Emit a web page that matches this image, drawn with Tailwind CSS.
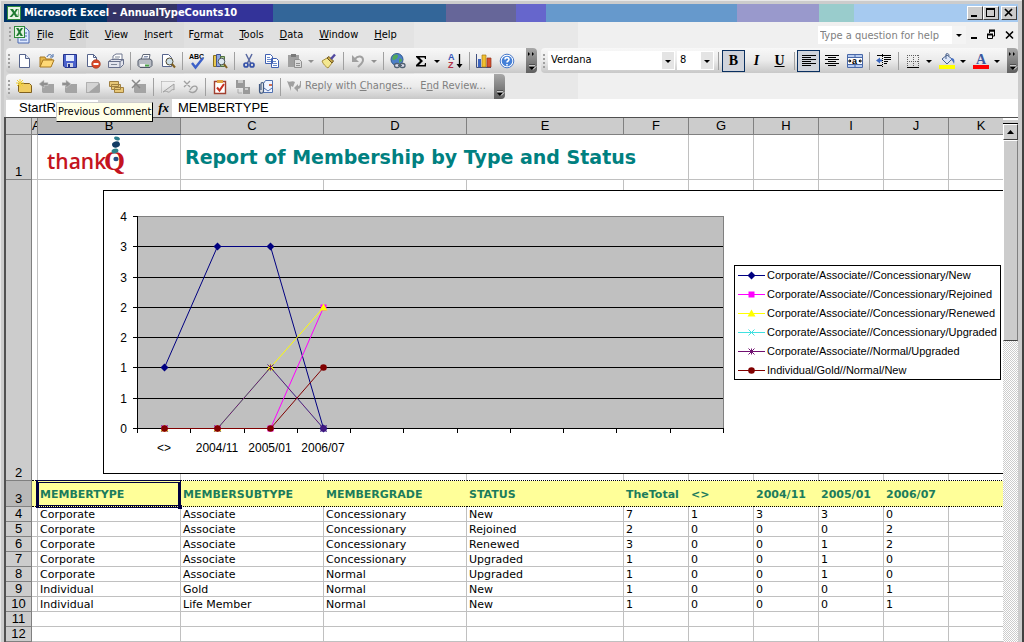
<!DOCTYPE html>
<html lang="en">
<head>
  <meta charset="UTF-8" />
  <meta name="viewport" content="width=device-width, initial-scale=1.0" />
  <title>Microsoft Excel - AnnualTypeCounts10</title>
  <script src="https://cdn.jsdelivr.net/npm/@tailwindcss/browser@4"></script>
</head>
<body class="bg-[#cccccc] text-black font-['DejaVu_Sans_Condensed','DejaVu_Sans',sans-serif] text-[11px]">
<div class="h-screen flex flex-col overflow-hidden pl-1 pt-1 pr-1 border-r-2 border-[#404040] shadow-[inset_1px_1px_0_#e8e8e8]">

  <!-- Title bar -->
  <header class="h-[18px] shrink-0 flex items-center pl-[3px] bg-[linear-gradient(90deg,#003366_103px,#333366_103px_173px,#333399_173px_269px,#336699_269px_442px,#666699_442px_512px,#6666cc_512px_542px,#6699cc_542px_733px,#9999cc_733px_815px,#99cccc_815px_850px,#a6caf0_850px)]">
    <svg class="size-[14px] shrink-0" viewBox="0 0 14 14"><rect x=".5" y=".5" width="13" height="13" fill="#e8f4e4" stroke="#2f8a3c"/><path d="M3 3h3l1.500 2.500L9 3h2L8.500 7l3 4h-3L7 8.500 5 11H2.500L6 7z" fill="#1e7a30"/><path d="M11.500 3v8M9.500 9h3" stroke="#8cc08c"/></svg>
    <h1 class="pl-[3px] text-[11px] leading-[18px] font-bold text-white whitespace-nowrap">Microsoft Excel - AnnualTypeCounts10</h1>
    <div class="ml-auto flex pr-px">
      <button aria-label="Minimize" class="w-4 h-[14px] bg-[#cccccc] border border-t-white border-l-white border-r-[#404040] border-b-[#404040]"><svg class="w-[14px] h-3" viewBox="0 0 14 12"><path d="M3 8h6v2H3z"/></svg></button>
      <button aria-label="Maximize" class="w-4 h-[14px] bg-[#cccccc] border border-t-white border-l-white border-r-[#404040] border-b-[#404040]"><svg class="w-[14px] h-3" viewBox="0 0 14 12"><path d="M2 1h9v9H2zM3 3v6h7V3z" fill-rule="evenodd"/></svg></button>
      <button aria-label="Close" class="ml-0.5 w-4 h-[14px] bg-[#cccccc] border border-t-white border-l-white border-r-[#404040] border-b-[#404040]"><svg class="w-[14px] h-3" viewBox="0 0 14 12"><path d="M3 2l7 7M10 2L3 9" stroke="#000" stroke-width="1.700"/></svg></button>
    </div>
  </header>

  <!-- Menus and toolbars -->
  <div class="shrink-0 bg-[linear-gradient(90deg,#d6d6d6_82px,#dcdcdc_82px_180px,#e0e0e0_180px_306px,#e3e3e3_306px_410px,#e8e8e8_410px_574px,#f0f0f0_574px)]">
    <nav class="h-[26px] flex items-center pl-1">
      <svg class="w-[22px] h-5 shrink-0" viewBox="0 0 22 20"><path d="M1 2h2v2H1zM1 6h2v2H1zM1 10h2v2H1zM1 14h2v2H1z" fill="#a0a0a0"/><path d="M10 3h8l3 3v12H10z" fill="#dce8ff" stroke="#4a68b0"/><path d="M16 8h3M16 11h3M12 15h7" stroke="#4a68b0"/><rect x="6.500" y="1.500" width="10" height="11" fill="#e4f2e0" stroke="#2f8a3c"/><path d="M8 3h2.500l1 2 1.500-2h2l-2.500 4 2.500 4h-2.500l-1-2-1.500 2H8l2.500-4z" fill="#1e7a30"/></svg>
      <ul class="-ml-px flex whitespace-nowrap">
        <li><button class="px-2"><u>F</u>ile</button></li>
        <li><button class="px-2"><u>E</u>dit</button></li>
        <li><button class="px-2"><u>V</u>iew</button></li>
        <li><button class="px-2"><u>I</u>nsert</button></li>
        <li><button class="px-2">F<u>o</u>rmat</button></li>
        <li><button class="px-2"><u>T</u>ools</button></li>
        <li><button class="px-2"><u>D</u>ata</button></li>
        <li><button class="px-2"><u>W</u>indow</button></li>
        <li><button class="px-2"><u>H</u>elp</button></li>
      </ul>
      <div class="ml-auto flex items-center h-[18px] bg-white">
        <input type="text" aria-label="Type a question for help" placeholder="Type a question for help" class="w-[134px] h-[18px] pl-0.5 placeholder:text-[#808080]" />
        <button aria-label="Show questions" class="w-[14px] h-[18px] bg-[#f4f4f4]"><svg class="w-[14px] h-[18px]" viewBox="0 0 14 18"><path d="M4 8h6l-3 3z"/></svg></button>
      </div>
      <button aria-label="Minimize workbook" class="w-4 h-4"><svg class="size-4" viewBox="0 0 16 16"><path d="M5 10h6v2H5z"/></svg></button>
      <button aria-label="Restore workbook" class="w-[18px] h-4"><svg class="w-[18px] h-4" viewBox="0 0 18 16"><path d="M7.500 6V4h5v5H11" fill="none" stroke="#000"/><path d="M7 3.500h6M5 7.500h6" stroke="#000" stroke-width="2"/><path d="M5.500 7v4.500h5V7" fill="none" stroke="#000"/></svg></button>
      <button aria-label="Close workbook" class="w-[18px] h-4"><svg class="w-[18px] h-4" viewBox="0 0 18 16"><path d="M6 4.500l7 7M13 4.500l-7 7" stroke="#000" stroke-width="1.600"/></svg></button>
    </nav>

    <div class="flex gap-1">
      <!-- Standard toolbar -->
      <div role="toolbar" aria-label="Standard" class="ml-0.5 h-[25px] flex items-center rounded bg-linear-to-b from-[#f8f8f8] via-[#ebebeb] to-[#c8c8c8]">
        <svg class="w-[6px] h-5" viewBox="0 0 6 20"><path d="M2 3h2v2H2zM2 7h2v2H2zM2 11h2v2H2zM2 15h2v2H2z" fill="#a0a0a0"/></svg>
        <button aria-label="New" class="w-[23px] flex justify-center"><svg class="size-4" viewBox="0 0 16 16"><path d="M3.500 1.500h6l4 4v9h-10z" fill="#fff" stroke="#56648c"/><path d="M9.500 1.500v4h4" fill="#dfe6f4" stroke="#56648c"/></svg></button>
        <button aria-label="Open" class="w-[23px] flex justify-center"><svg class="size-4" viewBox="0 0 16 16"><path d="M1 14V4h5l1 2h6v3" fill="#e6b84c" stroke="#a87820"/><path d="M1 14l3-7h11l-3 7z" fill="#ffd976" stroke="#a87820"/><path d="M8 4c1-3 4-3 5-1m1-2v3h-3" fill="none" stroke="#4068a8"/></svg></button>
        <button aria-label="Save" class="w-[23px] flex justify-center"><svg class="size-4" viewBox="0 0 16 16"><path d="M1.500 1.500h13v13H3l-1.500-1.500z" fill="#4b62cc" stroke="#24348c"/><path d="M4 2h8v6H4z" fill="#e4ecff"/><path d="M5 10h6v4H5z" fill="#d0d4e4"/><path d="M6 11h2v3H6z" fill="#24348c"/></svg></button>
        <button aria-label="Permission" class="w-[23px] flex justify-center"><svg class="size-4" viewBox="0 0 16 16"><path d="M2.500 1.500h6l3 3v9h-9z" fill="#fff" stroke="#56648c"/><path d="M8.500 1.500v3h3" fill="none" stroke="#56648c"/><circle cx="11" cy="11" r="4.300" fill="#d84828" stroke="#983018" stroke-width=".6"/><path d="M8.500 10h5v2h-5z" fill="#fff"/></svg></button>
        <button aria-label="E-mail" class="w-[23px] flex justify-center"><svg class="size-4" viewBox="0 0 16 16"><path d="M5 7V3l3-2h6v6" fill="#fff" stroke="#707890"/><path d="M.5 8.500l3-2h12v5l-3 3H.5z" fill="#e4e6ee" stroke="#68708c"/><path d="M.5 8.500h11.500v6M12 8.500l3.500-2" fill="none" stroke="#68708c"/><path d="M7 4h5M6 6h5M3 11.500h6" stroke="#808898"/></svg></button>
        <span class="w-[6px] h-[18px] flex justify-center"><i class="w-px bg-[#a0a0a0]"></i></span>
        <button aria-label="Print" class="w-[23px] flex justify-center"><svg class="size-4" viewBox="0 0 16 16"><path d="M4 7l2-5.500h7L12 7" fill="#fff" stroke="#606878"/><path d="M1 7.500l2-1.500h10l2 1.500v5l-2 2H3l-2-2z" fill="#b8bcc4" stroke="#505868"/><path d="M3 11h9v2.500H3z" fill="#f4f4f4"/><path d="M8 11.500h4v2H8z" fill="#48a048"/><path d="M7 3.500h4M6.500 5h4" stroke="#8894b0"/></svg></button>
        <button aria-label="Print preview" class="w-[23px] flex justify-center"><svg class="size-4" viewBox="0 0 16 16"><path d="M2.500 1.500h6l3 3v9h-9z" fill="#fff" stroke="#56648c"/><circle cx="9.500" cy="8.500" r="3.500" fill="#cfe0e8" stroke="#504830"/><path d="M12 11l3 3.500" stroke="#806020" stroke-width="2"/></svg></button>
        <span class="w-[6px] h-[18px] flex justify-center"><i class="w-px bg-[#a0a0a0]"></i></span>
        <button aria-label="Spelling" class="w-[23px] flex justify-center"><svg class="size-[18px]" viewBox="0 0 18 18"><text x="1" y="7" font-size="7" font-weight="bold" font-family="Liberation Sans, sans-serif">ABC</text><path d="M4 11l3.500 4.500L15 6" fill="none" stroke="#3c60c8" stroke-width="2.400"/></svg></button>
        <button aria-label="Research" class="w-[23px] flex justify-center"><svg class="size-4" viewBox="0 0 16 16"><path d="M1.500 2.500h3v11h-3z" fill="#e8c850" stroke="#887020"/><path d="M4.500 1.500h4v12h-4z" fill="#90a8e0" stroke="#405090"/><path d="M8.500 3.500h4v10h-4z" fill="#a8c890" stroke="#507040"/><circle cx="9.500" cy="8.500" r="3.300" fill="#dce8f0" stroke="#505860"/><path d="M12 11l3 4" stroke="#806020" stroke-width="2"/></svg></button>
        <span class="w-[6px] h-[18px] flex justify-center"><i class="w-px bg-[#a0a0a0]"></i></span>
        <button aria-label="Cut" class="w-[23px] flex justify-center"><svg class="size-4" viewBox="0 0 16 16"><path d="M5 1l4.500 9M11 1L6.500 10" stroke="#5868a0" stroke-width="1.500"/><circle cx="5" cy="12" r="2" fill="none" stroke="#3450a8" stroke-width="1.700"/><circle cx="11" cy="12" r="2" fill="none" stroke="#3450a8" stroke-width="1.700"/></svg></button>
        <button aria-label="Copy" class="w-[23px] flex justify-center"><svg class="size-4" viewBox="0 0 16 16"><path d="M1.500 1.500h5l2 2v7h-7zM7.500 5.500h5l2 2v7h-7z" fill="#fff" stroke="#4060b0"/><path d="M3 4.500h3M3 6.500h4M3 8.500h4M9 8.500h3M9 10.500h4M9 12.500h4" stroke="#6888cc"/></svg></button>
        <button aria-label="Paste" class="w-[23px] flex justify-center"><svg class="size-4" viewBox="0 0 16 16"><path d="M1 2h11v12H1z" fill="#a0a0a0"/><path d="M4 1h5v3H4z" fill="#787878"/><path d="M7.500 6.500h5l2 2v6h-7z" fill="#dcdcdc" stroke="#909090"/><path d="M9 10.500h4M9 12.500h4" stroke="#909090"/></svg></button>
        <button aria-label="Paste options" class="w-[11px]"><svg class="w-[11px] h-4" viewBox="0 0 11 16"><path d="M2 7h6l-3 3z" fill="#909090"/></svg></button>
        <button aria-label="Format painter" class="w-[23px] flex justify-center"><svg class="size-4" viewBox="0 0 16 16"><path d="M1 8l5-3 5 5-4 5c-2-1-5-4-6-7z" fill="#f4e890" stroke="#a89040"/><path d="M6 5l2-1.500 4.500 4.500L11 10z" fill="#c8a848" stroke="#705820"/><path d="M10 6l4-4.500" stroke="#5048a0" stroke-width="2.400"/></svg></button>
        <span class="w-[6px] h-[18px] flex justify-center"><i class="w-px bg-[#a0a0a0]"></i></span>
        <button aria-label="Undo" class="w-[23px] flex justify-center"><svg class="size-4" viewBox="0 0 16 16"><path d="M5 6c3-4 8-3 8 1 0 3-3 5-5 7" fill="none" stroke="#a0a0a0" stroke-width="2"/><path d="M2 2v7h7z" fill="#a0a0a0"/></svg></button>
        <button aria-label="Undo list" class="w-[11px]"><svg class="w-[11px] h-4" viewBox="0 0 11 16"><path d="M2 7h6l-3 3z" fill="#909090"/></svg></button>
        <span class="w-[6px] h-[18px] flex justify-center"><i class="w-px bg-[#a0a0a0]"></i></span>
        <button aria-label="Hyperlink" class="w-[23px] flex justify-center"><svg class="size-4" viewBox="0 0 16 16"><circle cx="7" cy="6.500" r="6" fill="#4c80c8" stroke="#305890"/><path d="M3 3c2-2 5-2 5 0S6 6 4 7 2 5 3 3zM9 6c2-1 3 0 3 2l-3 2z" fill="#50a858"/><rect x="4.500" y="10.500" width="5" height="4" rx="2" fill="#dde" stroke="#506070" stroke-width="1.300"/><rect x="10" y="10.500" width="5" height="4" rx="2" fill="#dde" stroke="#506070" stroke-width="1.300"/><path d="M8 12.500h4" stroke="#506070"/></svg></button>
        <button aria-label="AutoSum" class="w-[23px] flex justify-center"><svg class="size-4" viewBox="0 0 16 16"><path d="M3 3h10v3h-1l-.5-1.500H6.500L10 8l-4 4h5.500L12 10h1v3.500H3V12l4-4-4-4z"/></svg></button>
        <button aria-label="AutoSum list" class="w-[11px]"><svg class="w-[11px] h-4" viewBox="0 0 11 16"><path d="M2 7h6l-3 3z"/></svg></button>
        <button aria-label="Sort ascending" class="w-[23px] flex justify-center"><svg class="w-4 h-5" viewBox="0 0 16 20"><text x="1" y="9" font-size="9" font-weight="bold" font-family="Liberation Sans, sans-serif" fill="#3454b8">A</text><text x="1" y="17" font-size="9" font-weight="bold" font-family="Liberation Sans, sans-serif" fill="#b03048">Z</text><path d="M12.500 3v11" stroke="#000" stroke-width="1.300"/><path d="M9.500 13h6l-3 4z"/></svg></button>
        <span class="w-[6px] h-[18px] flex justify-center"><i class="w-px bg-[#a0a0a0]"></i></span>
        <button aria-label="Chart wizard" class="w-[23px] flex justify-center"><svg class="size-4" viewBox="0 0 16 16"><path d="M.5 1v13.500H15" fill="none" stroke="#405080"/><path d="M2 6h3v8H2z" fill="#3c64c0"/><path d="M6 2h4v12H6z" fill="#f0c030" stroke="#a87818" stroke-width=".7"/><path d="M11 5h4v9h-4z" fill="#d85030" stroke="#903018" stroke-width=".7"/></svg></button>
        <button aria-label="Help" class="w-[23px] flex justify-center"><svg class="size-4" viewBox="0 0 16 16"><circle cx="8" cy="8" r="6.800" fill="#fff" stroke="#4878c8"/><circle cx="8" cy="8" r="5.300" fill="#4480d8"/><path d="M6 6.500C6 4 10 4 10 6.500 10 8 8 8 8 9.500M8 11v1.500" fill="none" stroke="#fff" stroke-width="1.600"/></svg></button>
        <button aria-label="Toolbar options" class="ml-2 w-[11px] h-[25px] rounded-r bg-linear-to-b from-[#a8a8a8] to-[#606060]"><svg class="w-[11px] h-[25px]" viewBox="0 0 11 25"><path d="M2 4l2 2-2 2zM6 4l2 2-2 2zM3 16h6v1.200H3zM3 19h6l-3 3z"/><path d="M3 17.200h6M7 21.500l3-3" stroke="#fff"/></svg></button>
      </div>

      <!-- Formatting toolbar -->
      <div role="toolbar" aria-label="Formatting" class="flex-1 h-[25px] flex items-center rounded bg-linear-to-b from-[#f8f8f8] via-[#ebebeb] to-[#c8c8c8]">
        <svg class="w-[7px] h-5 shrink-0" viewBox="0 0 7 20"><path d="M2 3h2v2H2zM2 7h2v2H2zM2 11h2v2H2zM2 15h2v2H2z" fill="#a0a0a0"/></svg>
        <div class="relative">
          <select aria-label="Font" class="appearance-none block w-[127px] h-[19px] pl-[3px] bg-white"><option>Verdana</option></select>
          <svg class="absolute right-px top-px w-3 h-[17px] bg-[#e4e4e4] pointer-events-none" viewBox="0 0 12 17"><path d="M3 8h6l-3 3z"/></svg>
        </div>
        <div class="relative ml-0.5">
          <select aria-label="Font size" class="appearance-none block w-[37px] h-[19px] pl-[3px] bg-white"><option>8</option></select>
          <svg class="absolute right-px top-px w-3 h-[17px] bg-[#e4e4e4] pointer-events-none" viewBox="0 0 12 17"><path d="M3 8h6l-3 3z"/></svg>
        </div>
        <span class="w-[8px] h-[18px] flex justify-center"><i class="w-px bg-[#a0a0a0]"></i></span>
        <button class="w-[23px] h-[22px] border border-[#0a3060] bg-[#d0d4dc] font-['Liberation_Serif',serif] text-[14px] leading-5 font-bold">B</button>
        <button class="w-[23px] h-[22px] font-['Liberation_Serif',serif] text-[14px] leading-[22px] font-bold italic">I</button>
        <button class="w-[23px] h-[22px] font-['Liberation_Serif',serif] text-[14px] leading-[22px] font-bold underline">U</button>
        <span class="w-[6px] h-[18px] flex justify-center"><i class="w-px bg-[#a0a0a0]"></i></span>
        <button aria-label="Align left" class="w-[23px] h-[22px] border border-[#0a3060] bg-[#d0d4dc] flex justify-center items-center"><svg class="size-4 shrink-0" viewBox="0 0 16 16"><path d="M1 2.500h14M1 4.500h9M1 6.500h14M1 8.500h9M1 10.500h14M1 12.500h9" stroke="#000"/></svg></button>
        <button aria-label="Center" class="w-[23px] flex justify-center"><svg class="size-4" viewBox="0 0 16 16"><path d="M1 2.500h14M4 4.500h8M1 6.500h14M4 8.500h8M1 10.500h14M4 12.500h8" stroke="#000"/></svg></button>
        <button aria-label="Merge and center" class="w-[23px] flex justify-center"><svg class="size-4" viewBox="0 0 16 16"><path d="M.5 1.500h15v13H.5z" fill="#fff" stroke="#4868a8"/><path d="M1 2h14v2H1zM1 12h14v2H1z" fill="#b8ccf0"/><path d="M.5 4.500h15M.5 11.500h15M8 1.500v3M8 11.500v3" stroke="#4868a8"/><text x="5" y="10.500" font-size="9" font-weight="bold" font-family="Liberation Sans, sans-serif">a</text><path d="M1 8h3M12 8h3" stroke="#000"/><path d="M4.500 8L2.500 6v4zM11.500 8l2-2v4z"/></svg></button>
        <span class="w-[6px] h-[18px] flex justify-center"><i class="w-px bg-[#a0a0a0]"></i></span>
        <button aria-label="Decrease indent" class="w-[23px] flex justify-center"><svg class="size-4" viewBox="0 0 16 16"><path d="M1 2.500h14M8 4.500h7M8 6.500h7M8 8.500h4M8 10.500h3M1 12.500h5" stroke="#000"/><path d="M6.500 1v14" stroke="#000" stroke-dasharray="1 1"/><path d="M0 7.500l4-3v2h2v2H4v2z" fill="#3c68c0"/></svg></button>
        <span class="w-[6px] h-[18px] flex justify-center"><i class="w-px bg-[#a0a0a0]"></i></span>
        <button aria-label="Borders" class="w-[23px] flex justify-center"><svg class="size-4" viewBox="0 0 16 16"><path d="M2 2.500h12M2 8.500h12M2.500 2v12M8.500 2v12M13.500 2v12" stroke="#606060" stroke-dasharray="1 1"/><path d="M2 14.500h12" stroke="#000"/></svg></button>
        <button aria-label="Border list" class="w-[11px]"><svg class="w-[11px] h-4" viewBox="0 0 11 16"><path d="M2 7h6l-3 3z"/></svg></button>
        <button aria-label="Fill color" class="w-[23px] flex justify-center"><svg class="size-4" viewBox="0 0 16 16"><path d="M3 6l5-4 5 4-5 5z" fill="#dce6f8" stroke="#48608c"/><path d="M7 6V1c2-1 3 0 3 2" fill="none" stroke="#48608c"/><path d="M12 5c3 0 4 2 3 6-1-2-1-3-3-4z" fill="#4870c0"/><path d="M0 12h16v4H0z" fill="#ffff00"/></svg></button>
        <button aria-label="Fill color list" class="w-[11px]"><svg class="w-[11px] h-4" viewBox="0 0 11 16"><path d="M2 7h6l-3 3z"/></svg></button>
        <button aria-label="Font color" class="w-[23px] flex justify-center"><svg class="size-4" viewBox="0 0 16 16"><text x="3" y="11" font-size="14" font-weight="bold" font-family="Liberation Serif, serif" fill="#3c58a0">A</text><path d="M0 12h16v4H0z" fill="#ff0000"/></svg></button>
        <button aria-label="Font color list" class="w-[11px]"><svg class="w-[11px] h-4" viewBox="0 0 11 16"><path d="M2 7h6l-3 3z"/></svg></button>
        <button aria-label="Toolbar options" class="ml-auto w-[11px] h-[25px] rounded-r bg-linear-to-b from-[#a8a8a8] to-[#606060]"><svg class="w-[11px] h-[25px]" viewBox="0 0 11 25"><path d="M2 4l2 2-2 2zM6 4l2 2-2 2zM3 16h6v1.200H3zM3 19h6l-3 3z"/><path d="M3 17.200h6M7 21.500l3-3" stroke="#fff"/></svg></button>
      </div>
    </div>

    <!-- Reviewing toolbar -->
    <div class="flex pt-px pl-0.5">
      <div role="toolbar" aria-label="Reviewing" class="h-[25px] flex items-center rounded bg-linear-to-b from-[#f8f8f8] via-[#ebebeb] to-[#c8c8c8]">
        <svg class="w-[6px] h-5" viewBox="0 0 6 20"><path d="M2 3h2v2H2zM2 7h2v2H2zM2 11h2v2H2zM2 15h2v2H2z" fill="#a0a0a0"/></svg>
        <button aria-label="New comment" class="w-[23px] flex justify-center"><svg class="size-4" viewBox="0 0 16 16"><path d="M2.500 4.500h11l2 2v7h-12l-1-1z" fill="#f0cc60" stroke="#806020"/><path d="M4 0v8M0 4h8M1 1l6 6M7 1L1 7" stroke="#f0d030"/></svg></button>
        <button aria-label="Previous comment" class="w-[23px] flex justify-center"><svg class="size-4" viewBox="0 0 16 16"><path d="M3 5h12v9H4l-1-1z" fill="#a4a4a4"/><path d="M0 5l5-4v2.500h4v3H5V9z" fill="#909090" stroke="#d0d0d0" stroke-width=".6"/></svg></button>
        <button aria-label="Next comment" class="w-[23px] flex justify-center"><svg class="size-4" viewBox="0 0 16 16"><path d="M3 5h12v9H4l-1-1z" fill="#a4a4a4"/><path d="M9 5L4 1v2.500H0v3h4V9z" fill="#909090" stroke="#d0d0d0" stroke-width=".6"/></svg></button>
        <button aria-label="Show comment" class="w-[23px] flex justify-center"><svg class="size-4" viewBox="0 0 16 16"><path d="M1.500 3.500h12v10h-12z" fill="#d4d4d4" stroke="#808080" stroke-dasharray="1 1"/><path d="M4 13L15 4v9.500H4z" fill="#a4a4a4"/></svg></button>
        <button aria-label="Show all comments" class="w-[23px] flex justify-center"><svg class="size-4" viewBox="0 0 16 16"><path d="M1.500 2.500h9v5h-9zM3.500 5.500h9v5h-9zM6.500 8.500h9v5h-9z" fill="#e8c878" stroke="#a08040"/></svg></button>
        <button aria-label="Delete comment" class="w-[23px] flex justify-center"><svg class="size-4" viewBox="0 0 16 16"><path d="M3 5h12v9H4l-1-1z" fill="#a4a4a4"/><path d="M1 1l8 8M9 1L1 9" stroke="#888" stroke-width="1.500"/></svg></button>
        <span class="w-[6px] h-[18px] flex justify-center"><i class="w-px bg-[#a0a0a0]"></i></span>
        <button aria-label="Show ink" class="w-[23px] flex justify-center"><svg class="size-4" viewBox="0 0 16 16"><path d="M1.500 2.500h13M1.500 2.500v11" fill="none" stroke="#a0a0a0" stroke-dasharray="1 1"/><path d="M3 13L14 5v6c-2-2-4 3-6 2s-3-1-5 0z" fill="#dcdcdc" stroke="#a0a0a0"/></svg></button>
        <button aria-label="Delete ink" class="w-[23px] flex justify-center"><svg class="size-4" viewBox="0 0 16 16"><path d="M1 2l6 6M7 2L1 8M7 11c3-6 8-4 7-1s-5 5-8 2" fill="none" stroke="#a0a0a0" stroke-width="1.400"/></svg></button>
        <span class="w-[6px] h-[18px] flex justify-center"><i class="w-px bg-[#a0a0a0]"></i></span>
        <button aria-label="Create task" class="w-[23px] flex justify-center"><svg class="size-4" viewBox="0 0 16 16"><path d="M2.500 2.500h11v12h-11z" fill="#fff" stroke="#a04030" stroke-width="1.400"/><path d="M5 1h6v3H5z" fill="#e0a040"/><path d="M5 8.500l2.500 3L12 5" fill="none" stroke="#c83020" stroke-width="2"/></svg></button>
        <button aria-label="Update file" class="w-[23px] flex justify-center"><svg class="size-4" viewBox="0 0 16 16"><path d="M1 1h9v8H1zM8 8h7v7H8z" fill="#999"/><path d="M3 1h5v3H3zM10 9h3v2h-3z" fill="#ccc"/><path d="M3 10v4h4" fill="none" stroke="#aaa"/></svg></button>
        <button aria-label="Send as attachment" class="w-[23px] flex justify-center"><svg class="size-4" viewBox="0 0 16 16"><path d="M5.500 4.500l2-3h7v12h-9z" fill="#f0f4ff" stroke="#5070b0"/><path d="M6 9l4 3 4-3" fill="none" stroke="#5070b0"/><path d="M11 5h3v2h-3z" fill="#d07050"/><path d="M1.500 5v7c0 3 4 3 4 0V5c0-2-2.500-2-2.500 0v6" fill="none" stroke="#405880" stroke-width="1.200"/></svg></button>
        <span class="w-[6px] h-[18px] flex justify-center"><i class="w-px bg-[#a0a0a0]"></i></span>
        <button class="pl-1 flex items-center text-[#808080] whitespace-nowrap"><svg class="size-4 mr-0.5" viewBox="0 0 16 16"><path d="M0 2c3 2 5-1 8 1L6 8 4 7v5zM14 2v5c0 2-2 3-3 3v3L7 9l4-4v2c2 0 2-2 2-5z" fill="#a0a0a0"/></svg><span>Reply with <u>C</u>hanges...</span></button>
        <button class="pl-2 text-[#808080] whitespace-nowrap">E<u>n</u>d Review...</button>
        <button aria-label="Toolbar options" class="ml-2 w-[11px] h-[25px] rounded-r bg-linear-to-b from-[#a8a8a8] to-[#606060]"><svg class="w-[11px] h-[25px]" viewBox="0 0 11 25"><path d="M3 16h6v1.200H3zM3 19h6l-3 3z"/><path d="M3 17.200h6M7 21.500l3-3" stroke="#fff"/></svg></button>
      </div>
    </div>
  </div>

  <!-- Formula bar -->
  <div class="relative h-[18px] shrink-0 flex items-center pl-0.5 bg-[#d6d6d6] font-['Liberation_Sans',Arial,sans-serif] text-[13px]">
    <input type="text" aria-label="Name box" value="StartR" class="w-[92px] h-[17px] pl-[13px] bg-white" />
    <label for="formula" class="w-[74px] pr-[3px] text-right font-['Liberation_Serif',serif] text-[13px] italic font-bold">fx</label>
    <input id="formula" type="text" value="MEMBERTYPE" class="flex-1 h-[18px] pl-1.5 bg-white" />
    <div role="tooltip" class="absolute z-20 left-[52px] top-[3px] px-px h-5 leading-[18px] whitespace-nowrap bg-[#ffffe8] border border-t-[#cccccc] border-l-[#cccccc] border-r-black border-b-black font-['DejaVu_Sans_Condensed','DejaVu_Sans',sans-serif] text-[11px]">Previous Comment</div>
  </div>

  <!-- Worksheet -->
  <main class="flex-1 min-h-0 flex border-l-2 border-t border-[#505050] bg-white">
    <div class="flex-1 min-w-0 overflow-hidden">
      <table class="w-[1008px] min-w-full table-fixed border-separate border-spacing-0 font-['DejaVu_Sans',Verdana,sans-serif] whitespace-nowrap">
        <colgroup>
          <col class="w-[26px]" /><col class="w-[6px]" /><col class="w-[143px]" /><col class="w-[143px]" /><col class="w-[143px]" /><col class="w-[157px]" />
          <col class="w-[65px]" /><col class="w-[65px]" /><col class="w-[65px]" /><col class="w-[65px]" /><col class="w-[65px]" /><col />
        </colgroup>
        <thead>
          <tr id="columnHeads"></tr>
        </thead>
        <tbody>
          <tr>
            <th class="p-0 h-[45px] align-bottom border-r border-b border-[#808080] bg-[#cccccc] font-normal font-['Liberation_Sans',Arial,sans-serif] text-[13px] leading-[15px]">1</th>
            <td class="p-0 border-r border-b border-[#c0c0c0]"></td>
            <td class="p-0 border-r border-b border-[#c0c0c0]">
              <svg class="ml-[9px] w-[84px] h-11" viewBox="0 0 84 44" role="img" aria-label="thankQ">
                <text x="0" y="34" font-size="21" font-family="Open Sans, sans-serif" font-weight="600" fill="#c41420">thank</text>
                <text x="57" y="35" font-size="27" font-family="Liberation Serif, serif" font-weight="bold" fill="#c41420">Q</text>
                <ellipse cx="70" cy="3.500" rx="3" ry="1.800" transform="rotate(20 70 3.500)" fill="#2c7c8c"/>
                <ellipse cx="69" cy="9.500" rx="4" ry="3" transform="rotate(-15 69 9.500)" fill="#123c64"/>
                <ellipse cx="68" cy="16" rx="3.500" ry="2.300" transform="rotate(-15 68 16)" fill="#2c8088"/>
                <ellipse cx="69" cy="24" rx="2.600" ry="2.200" fill="#244c84"/>
              </svg>
            </td>
            <td colspan="4" class="py-0 px-1 border-r border-b border-[#c0c0c0] text-[19px] leading-[44px] font-bold text-[#008080]">Report of Membership by Type and Status</td>
            <td class="p-0 border-r border-b border-[#c0c0c0]"></td>
            <td class="p-0 border-r border-b border-[#c0c0c0]"></td>
            <td class="p-0 border-r border-b border-[#c0c0c0]"></td>
            <td class="p-0 border-r border-b border-[#c0c0c0]"></td>
            <td class="p-0 border-b border-[#c0c0c0]"></td>
          </tr>
          <tr>
            <th class="p-0 h-[301px] align-bottom border-r border-b border-[#808080] bg-[#cccccc] font-normal font-['Liberation_Sans',Arial,sans-serif] text-[13px] leading-[15px]">2</th>
            <td class="p-0 border-r border-r-[#c0c0c0] border-b border-b-black [border-bottom-style:dotted]"></td>
            <td class="relative p-0 border-r border-r-[#c0c0c0] border-b border-b-black [border-bottom-style:dotted]">
              <svg id="chart" class="absolute z-10 left-[65px] top-[10px] w-[920px] h-[284px] font-['Liberation_Sans',Arial,sans-serif]" viewBox="103 190 920 284"></svg>
            </td>
            <td class="p-0 border-r border-r-[#c0c0c0] border-b border-b-black [border-bottom-style:dotted]"></td>
            <td class="p-0 border-r border-r-[#c0c0c0] border-b border-b-black [border-bottom-style:dotted]"></td>
            <td class="p-0 border-r border-r-[#c0c0c0] border-b border-b-black [border-bottom-style:dotted]"></td>
            <td class="p-0 border-r border-r-[#c0c0c0] border-b border-b-black [border-bottom-style:dotted]"></td>
            <td class="p-0 border-r border-r-[#c0c0c0] border-b border-b-black [border-bottom-style:dotted]"></td>
            <td class="p-0 border-r border-r-[#c0c0c0] border-b border-b-black [border-bottom-style:dotted]"></td>
            <td class="p-0 border-r border-r-[#c0c0c0] border-b border-b-black [border-bottom-style:dotted]"></td>
            <td class="p-0 border-r border-r-[#c0c0c0] border-b border-b-black [border-bottom-style:dotted]"></td>
            <td class="p-0 border-b border-b-black [border-bottom-style:dotted]"></td>
          </tr>
          <tr id="fieldNames"></tr>
        </tbody>
        <tbody id="memberRows"></tbody>
      </table>
    </div>

    <!-- Vertical scroll bar -->
    <div class="w-[15px] shrink-0 flex flex-col bg-[repeating-conic-gradient(#cccccc_0_25%,#ffffff_0_50%)] bg-size-[2px_2px]">
      <div class="h-[6px] bg-[#cccccc] border-b border-black border-t-2 border-t-white"></div>
      <button aria-label="Scroll up" class="h-4 bg-[#cccccc] border border-t-white border-l-white border-r-[#404040] border-b-[#404040]"><svg class="w-[13px] h-[14px]" viewBox="0 0 13 14"><path d="M3 9h7L6.500 5z"/></svg></button>
      <div class="h-[201px] bg-[#cccccc] border border-t-white border-l-white border-r-[#808080] border-b-[#404040]"></div>
    </div>
  </main>
</div>

<script>
  const fields = ["MEMBERTYPE", "MEMBERSUBTYPE", "MEMBERGRADE", "STATUS", "TheTotal", "<>", "2004/11", "2005/01", "2006/07"];
  const members = [
    ["Corporate", "Associate", "Concessionary", "New", 7, 1, 3, 3, 0],
    ["Corporate", "Associate", "Concessionary", "Rejoined", 2, 0, 0, 0, 2],
    ["Corporate", "Associate", "Concessionary", "Renewed", 3, 0, 0, 1, 2],
    ["Corporate", "Associate", "Concessionary", "Upgraded", 1, 0, 0, 1, 0],
    ["Corporate", "Associate", "Normal", "Upgraded", 1, 0, 0, 1, 0],
    ["Individual", "Gold", "Normal", "New", 1, 0, 0, 0, 1],
    ["Individual", "Life Member", "Normal", "New", 1, 0, 0, 0, 1],
    [],
    []
  ];
  const esc = text => String(text).replace(/</g, "&lt;").replace(/>/g, "&gt;");

  // Column letters
  document.getElementById("columnHeads").innerHTML =
    `<th class="p-0 h-[17px] border-r border-b border-[#808080] bg-[#cccccc]"></th>` +
    [..."ABCDEFGHIJK"].map(letter => {
      const look = letter === "B" ? "bg-[#b8b8b8] border-b-[#102858]" : "bg-[#cccccc] border-b-[#808080]";
      return `<th class="p-0 h-[17px] overflow-hidden border-r border-b border-r-[#808080] ${look} font-normal font-['Liberation_Sans',Arial,sans-serif] text-[13px] leading-4">${letter}</th>`;
    }).join("");

  // Field names, first one selected
  document.getElementById("fieldNames").innerHTML =
    `<th class="p-0 h-[26px] align-bottom border-r border-b border-[#808080] bg-[#b8b8b8] font-normal font-['Liberation_Sans',Arial,sans-serif] text-[13px] leading-[15px]">3</th>` +
    `<td class="p-0 bg-[#ffff99] border-b border-dotted border-black"></td>` +
    fields.map((name, i) => {
      const frame = i === 0 ? `<span class="absolute z-20 -left-0.5 right-0 -top-px -bottom-0.5 border-3 border-[#000040] [border-style:double_solid]"></span><span class="absolute z-20 -right-px -bottom-[3px] size-1 bg-[#000040]"></span>` : "";
      return `<td class="relative pt-0.5 pb-0 px-0.5 bg-[#ffff99] border-b border-dotted border-black font-bold text-[#1c7c5c] leading-[23px]">${frame}${esc(name)}</td>`;
    }).join("") +
    `<td class="p-0 bg-[#ffff99] border-b border-dotted border-black"></td>`;

  document.getElementById("memberRows").innerHTML = members.map((member, r) => {
    const edge = member.length ? "border-r" : "";
    let cells = `<th class="p-0 h-[15px] border-r border-b border-[#808080] bg-[#cccccc] font-normal font-['Liberation_Sans',Arial,sans-serif] text-[13px] leading-[14px]">${r + 4}</th>`;
    cells += `<td class="p-0 ${edge} border-b border-[#c0c0c0]"></td>`;
    for (let i = 0; i < 10; i++) {
      cells += `<td class="pt-0.5 pb-0 px-0.5 border-r border-b border-[#c0c0c0] leading-3">${esc(member[i] ?? "")}</td>`;
    }
    return `<tr>${cells}</tr>`;
  }).join("");

  // Chart
  const xs = [164, 217, 270, 323];
  const lines = [246, 277, 307, 337, 367, 398];
  const base = 428;
  const series = [
    { name: "Corporate/Associate//Concessionary/New", color: "#000080", mark: "diamond", ys: [367, 246, 246, 428] },
    { name: "Corporate/Associate//Concessionary/Rejoined", color: "#ff00ff", mark: "square", ys: [428, 428, 428, 307] },
    { name: "Corporate/Associate//Concessionary/Renewed", color: "#ffff00", mark: "triangle", ys: [428, 428, 367, 307] },
    { name: "Corporate/Associate//Concessionary/Upgraded", color: "#40e0e0", mark: "cross", ys: [428, 428, 367, 428] },
    { name: "Corporate/Associate//Normal/Upgraded", color: "#701070", mark: "star", ys: [428, 428, 367, 428] },
    { name: "Individual/Gold//Normal/New", color: "#800000", mark: "dot", ys: [428, 428, 428, 367] }
  ];

  function marker(kind, x, y, color) {
    if (kind === "diamond") return `<path d="M${x} ${y - 4}l4 4-4 4-4-4z" fill="${color}"/>`;
    if (kind === "square") return `<path d="M${x - 3} ${y - 3}h6v6h-6z" fill="${color}"/>`;
    if (kind === "triangle") return `<path d="M${x} ${y - 4}l4 7h-8z" fill="${color}"/>`;
    if (kind === "cross") return `<path d="M${x - 3} ${y - 3}l6 6m0-6l-6 6" stroke="${color}"/>`;
    if (kind === "star") return `<path d="M${x - 3} ${y - 3}l6 6m0-6l-6 6M${x} ${y - 3}v6" stroke="${color}"/>`;
    return `<circle cx="${x}" cy="${y}" r="3.300" fill="${color}"/>`;
  }

  let art = `<rect x="103.500" y="190.500" width="940" height="283" fill="#fff" stroke="#000"/>`;
  art += `<rect x="137.500" y="216.500" width="586" height="212" fill="#c0c0c0" stroke="#808080"/>`;
  lines.forEach(y => art += `<path d="M133 ${y}.5h590" stroke="#000"/>`);
  art += `<path d="M137.500 216v213M133 216.500h5M133 428.500h590" stroke="#000"/>`;
  for (let i = 0; i < 12; i++) {
    art += `<path d="M${Math.round(137 + i * 586 / 11)}.5 428v5" stroke="#000"/>`;
  }
  [4, 3, 3, 2, 2, 1, 1, 0].forEach((value, i) => {
    art += `<text x="127" y="${[216, ...lines, base][i] + 5}" font-size="12" text-anchor="end">${value}</text>`;
  });
  ["<>", "2004/11", "2005/01", "2006/07"].forEach((label, i) => {
    art += `<text x="${xs[i]}" y="452" font-size="12" text-anchor="middle">${esc(label)}</text>`;
  });
  series.forEach(s => {
    art += `<polyline points="${xs.map((x, i) => `${x + 0.5},${s.ys[i] + 0.5}`).join(" ")}" fill="none" stroke="${s.color}"/>`;
    art += xs.map((x, i) => marker(s.mark, x + 0.5, s.ys[i] + 0.5, s.color)).join("");
  });
  art += marker("square", 323.5, 428.5, "#401880");
  art += `<rect x="734.500" y="265.500" width="266" height="114" fill="#fff" stroke="#000"/>`;
  series.forEach((s, i) => {
    const y = 275.5 + i * 19;
    art += `<path d="M738 ${y}h27" stroke="${s.color}"/>${marker(s.mark, 751.5, y, s.color)}`;
    art += `<text x="767" y="${y + 3.500}" font-size="11">${s.name}</text>`;
  });
  document.getElementById("chart").innerHTML = art;
</script>
</body>
</html>
